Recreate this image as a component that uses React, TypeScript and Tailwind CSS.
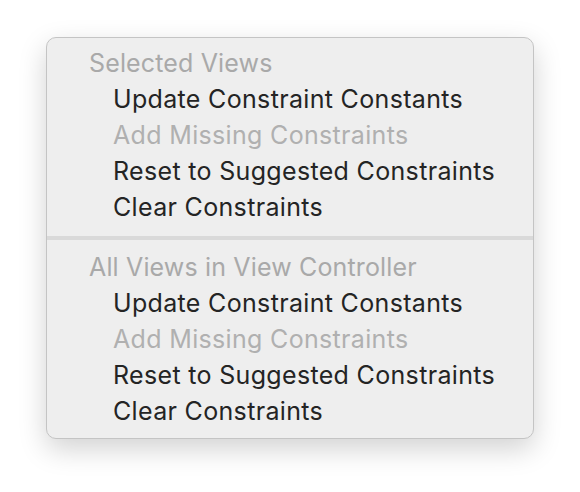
const sections = [
  {
    title: 'Selected Views',
    items: [
      { label: 'Update Constraint Constants', enabled: true },
      { label: 'Add Missing Constraints', enabled: false },
      { label: 'Reset to Suggested Constraints', enabled: true },
      { label: 'Clear Constraints', enabled: true },
    ],
  },
  {
    title: 'All Views in View Controller',
    items: [
      { label: 'Update Constraint Constants', enabled: true },
      { label: 'Add Missing Constraints', enabled: false },
      { label: 'Reset to Suggested Constraints', enabled: true },
      { label: 'Clear Constraints', enabled: true },
    ],
  },
];

export default function App() {
  return (
    <div className="h-[492px] w-[580px] bg-white pl-[46px] pt-[37px] font-['Inter','Noto_Sans',sans-serif]">
      <div className="w-[488px] rounded-[10px] border border-[#c4c4c4] bg-[#eeeeee] py-2 shadow-[0_10px_28px_rgba(0,0,0,0.18)]">
        {sections.map((section, i) => (
          <div key={section.title}>
            {i > 0 && <div className="my-[10px] h-[4px] bg-[#d9d9d9]" />}
            <div className="flex h-9 items-center pl-[42px] text-[25px] tracking-[0.15px] text-[#a9a9a9]">
              {section.title}
            </div>
            {section.items.map(item => (
              <div
                key={item.label}
                className={`flex h-9 items-center pl-[66px] text-[25px] tracking-[0.33px] ${
                  item.enabled ? 'text-[#242424]' : 'text-[#b0b0b0]'
                }`}
              >
                {item.label}
              </div>
            ))}
          </div>
        ))}
      </div>
    </div>
  );
}
